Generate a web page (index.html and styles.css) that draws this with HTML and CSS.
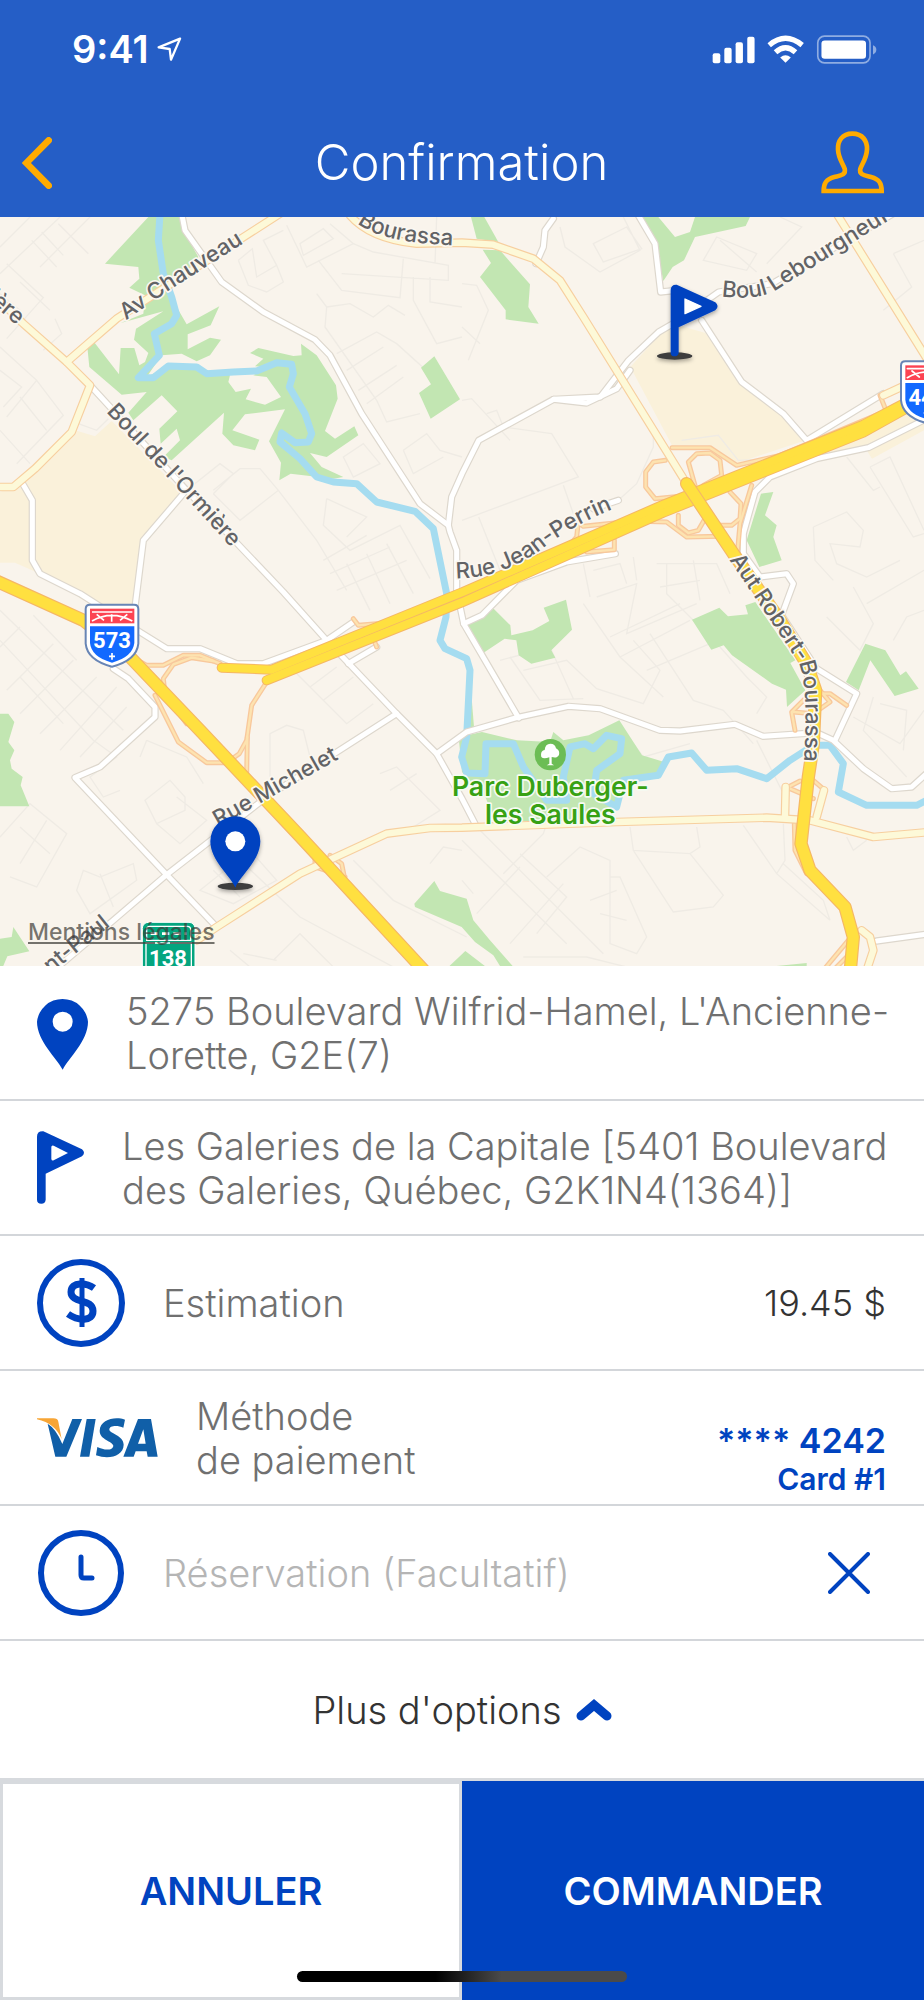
FILE: index.html
```html
<!DOCTYPE html>
<html lang="fr">
<head>
    <meta charset="UTF-8">
    <meta name="viewport" content="width=device-width, initial-scale=1">
    <title>Confirmation</title>
    <link rel="stylesheet" href="styles.css">
</head>
<body>

<header class="header">
    <div class="status-bar">
        <span class="time">9:41</span>
        <svg class="location" viewBox="468 108 80 78" aria-hidden="true">
            <path d="M539 115 L473 142 L507 147 L511 180 Z"/>
        </svg>
        <svg class="status-icons" viewBox="750 104 496 86" aria-hidden="true">
            <g fill="#fff">
                <rect x="752" y="158" width="23" height="30" rx="6"/>
                <rect x="787" y="142" width="22" height="46" rx="6"/>
                <rect x="821" y="125" width="22" height="63" rx="6"/>
                <rect x="856" y="109" width="22" height="79" rx="6"/>
                <path d="M971 187 L955 171 Q971 158 987 171 Z"/>
                <rect x="1079" y="120" width="134" height="55" rx="10"/>
            </g>
            <g fill="none" stroke="#fff" stroke-width="16">
                <path d="M922 134 Q971 93 1021 134"/>
                <path d="M941 155 Q971 128 1001 155"/>
            </g>
            <rect x="1068" y="107" width="157" height="80" rx="20" fill="none" stroke="#8fade2" stroke-width="5"/>
            <path d="M1234 134 Q1244 138 1244 148 Q1244 158 1234 162 Z" fill="#8fade2"/>
        </svg>
    </div>
    <nav class="nav-bar">
        <button class="icon-btn" aria-label="Retour">
            <svg width="30" height="52" viewBox="66 411 90 156"><path class="back-icon" d="M146 421 L79 489 L146 557"/></svg>
        </button>
        <h1>Confirmation</h1>
        <button class="icon-btn" aria-label="Profil">
            <svg width="64" height="63" viewBox="1076 389 192 189"><path class="user-icon" d="M1170 397 C1139 397 1126 419 1127 444 C1128 471 1141 485 1147 502 C1152 521 1135 522 1116 527 C1091 534 1084 546 1084 569 L1258 569 C1258 546 1251 534 1226 527 C1207 522 1189 520 1194 502 C1200 485 1213 471 1214 444 C1215 419 1201 397 1170 397 Z"/></svg>
        </button>
    </nav>
</header>

<main>
    <section class="map" aria-label="Carte du trajet">
        <svg viewBox="0 20 2772 2248">
            <defs>
                <g id="local-roads">
                    <path d="M545 10 L555 60 L665 215 L790 305 L945 388 L990 435 L1085 610 L1260 880 L1345 945 L1350 965 L1370 1020 L1370 1140 L1391 1240 L1556 1523"/>
                    <path d="M1345 945 L1355 860 L1386 790 L1436 690 L1661 567 L1801 560 L1886 450 L1976 365 L2036 330 L2156 245 L2316 220 L2680 10"/>
                    <path d="M1661 567 L1760 578 L1850 535 L1890 480"/>
                    <path d="M275 530 L560 840 L850 1145 L980 1290 L1190 1510 L1310 1630 L1386 1765 L1425 1840"/>
                    <path d="M550 850 L430 990 L405 1190"/>
                    <path d="M65 815 L97 870 L97 1050 L120 1090 L240 1150 L420 1265 L500 1315 L600 1315 L710 1360 L790 1360 L980 1290 L1060 1235"/>
                    <path d="M340 1375 L385 1405 L465 1490 L465 1520 L300 1670 L225 1702 L500 1993 L650 2150"/>
                    <path d="M1130 1310 L1045 1360"/>
                    <path d="M1310 1630 L1400 1565 L1550 1522 L1705 1488 L1800 1495 L1980 1560 L2040 1562 L2205 1542 L2290 1578 L2450 1567 L2500 1590 L2590 1675 L2675 1735 L2735 1730 L2790 1680"/>
                    <path d="M1190 1510 L800 1760 L500 1993 L340 2130 L150 2290"/>
                    <path d="M1912 10 L1965 100 L1982 245 L2030 240"/>
                    <path d="M2105 330 L2225 515 L2350 610 L2420 690 L2650 550"/>
                    <path d="M2790 620 L2605 712 L2450 745 L2310 800 L2265 845 L2230 970 L2230 1030 L2280 1100 L2360 1090 L2380 1120 L2345 1215 L2450 1375 L2570 1450 L2505 1590"/>
                    <path d="M1660 25 L1635 60 L1630 110 L1608 160"/>
                    <path d="M1855 870 L1780 895"/>
                    <path d="M1846 1030 L1700 1055 L1550 1110 L1446 1215 L1391 1240"/>
                    <path d="M2630 2192 L2790 2170"/>
                </g>
                <g id="avenues">
                    <path d="M-10 262 L70 340 L200 455 L270 525 L215 665 L105 775 L40 830 L-10 830"/>
                    <path d="M200 455 L350 325 L840 10"/>
                    <path d="M2510 10 L2790 460"/>
                    <path d="M2790 490 L2650 555"/>
                    <path d="M1050 15 Q1110 85 1250 100 L1386 97 L1480 103 L1600 145 L1680 210 L1750 320 L2060 820"/>
                    <path d="M590 2190 L650 2150 L900 1990 L1160 1870 L1290 1853 L1386 1852 L1850 1835 L2300 1822 L2430 1830 L2620 1880 L2790 1865"/>
                    <path d="M2355 1820 L2357 1730"/>
                    <path d="M2450 1820 L2472 1740"/>
                    <path d="M2600 2280 L2620 2220 L2610 2180 L2585 2160"/>
                </g>
                <g id="ramps">
                    <path d="M405 1345 L440 1365 L490 1365 L550 1335 L600 1335 L660 1360"/>
                    <path d="M640 1352 L575 1342 L520 1362 L490 1405 L495 1450 L560 1540"/>
                    <path d="M465 1455 L535 1595 L620 1657 L680 1657 L718 1630 L740 1590 L755 1485 L800 1415"/>
                    <path d="M742 1580 L740 1690"/>
                    <path d="M2016 712 L2130 712 L2210 765 L2340 735 L2640 610"/>
                    <path d="M1996 750 L1960 755 L1937 785 L1937 830 L1965 865 L2040 858"/>
                    <path d="M2085 825 L2065 755 L2090 730 L2130 728 L2160 750 L2165 795 L2110 825"/>
                    <path d="M2190 845 L2223 880 L2220 925 L2195 945 L2140 945"/>
                    <path d="M2255 825 L2220 940 L2213 1020"/>
                    <path d="M1700 1015 L1730 980 L1735 935 L1750 948 L1900 932 L2000 935 L2060 980 L2160 978"/>
                    <path d="M2035 915 L2035 945 L2065 968 L2095 960 L2115 925"/>
                    <path d="M1760 1025 L1843 1018 L1843 990"/>
                    <path d="M2385 1560 L2375 1505 L2430 1450 L2490 1450 L2540 1485"/>
                    <path d="M2380 1505 L2440 1510 L2490 1475 L2460 1440"/>
                    <path d="M2365 1730 L2400 1712 M2370 1735 L2440 1765 M2440 1710 L2475 1740"/>
                    <path d="M2383 1840 L2385 1920 L2420 1990"/>
                    <path d="M1060 1225 L1075 1245 L1130 1240 M1130 1310 L1118 1280"/>
                    <path d="M945 1930 L945 1970 L1035 2000 M990 1935 L1025 1960 L1035 2010"/>
                    <path d="M2470 2280 L2545 2190 M2500 2280 L2545 2235 M2640 555 L2660 605"/>
                </g>
                <g id="highway">
                    <path d="M665 1372 L815 1378 L1386 1146 L1990 883 L2590 643 L2720 575"/>
                    <path d="M800 1410 L1386 1176 L1990 907 L2590 667 L2800 550"/>
                </g>
                <g id="autoroute">
                    <path d="M-20 1108 L250 1230 L390 1340 L600 1560 L900 1878 L1290 2300"/>
                    <path d="M2060 820 L2090 865 L2200 1030 L2340 1230 L2420 1360 L2447 1440 L2440 1600 L2425 1700 L2403 1900 L2430 1980 L2535 2090 L2560 2180 L2550 2290"/>
                </g>
                <path id="lb-chauveau" d="M378 330 L500 245 L760 80"/>
                <path id="lb-ormiere" d="M318 605 L520 820 L760 1085"/>
                <path id="lb-ormiere-ouest" d="M-180 145 L50 345"/>
                <path id="lb-bourassa" d="M1072 38 Q1150 105 1420 106"/>
                <path id="lb-lebourgneuf" d="M2164 258 Q2290 275 2350 225 L2780 -40"/>
                <path id="lb-perrin" d="M1368 1104 Q1500 1105 1620 1020 Q1720 940 1880 880"/>
                <path id="lb-aut" d="M2188 1048 L2395 1355 Q2432 1440 2405 1740"/>
                <path id="lb-michelet" d="M655 1850 L1080 1610"/>
                <path id="lb-paul" d="M152 2290 L420 2075"/>
                <filter id="shadow" x="-20%" y="-20%" width="140%" height="140%">
                    <feDropShadow dx="0" dy="6" stdDeviation="6" flood-opacity="0.35"/>
                </filter>
            </defs>

            <rect class="land" x="0" y="0" width="2772" height="2300"/>

            <g class="district">
                <path d="M70 815 L210 655 L285 678 L335 632 L550 850 L428 990 L408 1145 L400 1265 L260 1175 L120 1090 L45 1057 L0 1057 L0 845 Z"/>
                <path d="M1891 470 L1986 365 L2036 345 L2116 368 L2226 515 L2351 610 L2416 690 L2206 760 L2126 705 L2016 705 Z"/>
                <path d="M2296 790 L2416 720 L2772 580 L2772 660 L2616 745 L2600 720 Z"/>
            </g>

            <!-- small streets -->
            <g class="streets">
                <path d="M0 190 L180 20 M0 110 L90 20 M120 170 L270 20 M60 215 L150 300 M20 160 L130 262 L20 385 M175 40 L265 130 M95 90 L170 170 M125 65 L190 135"/>
                <path d="M0 250 L60 300 M165 325 L185 370 L130 420 M0 410 L110 510 L20 620 M0 480 L65 530 L10 590 M110 510 L190 615 L50 760 M60 560 L140 660 M0 660 L90 760 M235 640 L290 660 L325 625"/>
                <path d="M715 150 L757 115 L770 200 L830 165 L790 90 L850 60 M715 150 L745 225 L800 245 L850 215 L830 165 M860 45 L920 170 L1060 100 L990 40 M900 100 L970 55 L1000 85 L910 135 Z"/>
                <path d="M955 150 L1025 240 L1200 262 L1210 145 M1025 190 L1345 210 L1345 165 L1120 125 L1060 100 M1240 200 L1240 270 L1310 400 L1386 380 M1290 200 L1290 275 L1386 290 M1310 20 L1305 160"/>
                <path d="M950 250 L980 290 L975 350 L1130 570 L1160 635 L1260 610 M980 290 L1050 280 L1120 320 L1165 285 L1215 315 M1010 430 L1130 365 L1190 400 L1290 490 M1040 480 L1150 410 M1075 540 L1190 465 M1100 580 L1210 500"/>
                <path d="M640 850 L720 930 L835 840 L950 990 L1040 1140 M640 840 L720 775 L780 775 L835 840 M560 840 L660 760 L700 790 L640 850 M980 865 L970 945 L1050 1020 L1200 945 L1290 1105 M980 865 L1100 920 L1040 980 M1030 740 L1090 700 L1140 760 L1060 800 Z M1210 720 L1280 670 L1320 720 L1386 740 M1210 720 L1240 790 L1330 740"/>
                <path d="M970 1050 L1100 975 M990 1090 L1170 1010 M1010 1140 L1220 1050 M1040 1060 L1110 1200 M1100 1030 L1170 1180 M1160 1000 L1240 1150"/>
                <path d="M1386 220 L1430 225 L1465 300 L1405 450 M1386 350 L1440 400 M1680 50 L1695 110 L1800 185 L1920 120 L1870 20 M1780 100 L1880 50 L1925 115 L1810 155 Z M2110 150 L2150 80 L2270 130 L2240 180 Z M2160 90 L2270 185 M2340 20 L2405 50 L2300 160"/>
                <path d="M1386 570 L1415 565 L1530 690 M1460 610 L1490 600 L1510 650 L1655 670 L1735 800 L1386 930 M1690 825 L1720 910 M1960 640 L1960 710 L1910 820 L1860 865 M2045 690 L2155 675 L2215 750 L2340 745 M1436 920 L1500 1080"/>
                <path d="M2680 130 L2772 90 M2680 130 L2735 230 L2650 300 M2540 740 L2620 840 L2640 830 M2610 770 L2670 740 L2772 960 M2610 770 L2740 980 L2772 970 M2440 950 L2540 905 L2590 960 L2580 1010 L2490 1000 L2510 1060 L2600 1100 L2700 1050 M2440 950 L2445 1050 L2500 1110"/>
                <path d="M1500 1350 L1650 1310 L1720 1465 M1530 1340 L1620 1470 L1750 1465 M1570 1380 L1700 1350 L1790 1435 L1930 1480 L1980 1380 L1900 1290 M1750 1180 L1860 1340 L1990 1460 M1790 1160 L1910 1120 L1880 1270 L2090 1180 M1830 1280 L2040 1180 M1860 1340 L2070 1230 M1940 1380 L2130 1300 M1950 1270 L2080 1470 L2170 1500 L2260 1600 M2000 1060 L2000 1150 L2160 1310 L2240 1400 L2300 1460 L2270 1510 M2080 1050 L2100 1170 M1980 1130 L2100 1110"/>
                <path d="M1770 1160 L1750 1060 M1780 1080 L1860 1060 L1880 1120 M1900 1040 L1910 1110 M1970 1060 L2150 1060 L2190 1150 M2480 1220 L2580 1320 L2620 1240 L2560 1130 M2680 1290 L2720 1220 L2772 1200 M2600 1180 L2772 1080 M2620 1460 L2590 1560 L2720 1700 M2560 1520 L2700 1600 L2772 1500 M2640 1480 L2720 1500 L2710 1620"/>
                <path d="M0 1200 L370 1560 M0 1290 L280 1590 M60 1250 L0 1310 M160 1300 L20 1440 M220 1350 L60 1510 M290 1400 L120 1570 M350 1430 L180 1620 M100 1215 L230 1350 M380 1490 L240 1640 M60 1400 L190 1540 M280 1590 L350 1640 L270 1700 L310 1760 L360 1740"/>
                <path d="M0 1880 L90 1780 L200 1870 L110 2030 L30 2000 M60 1850 L150 1930 M140 1830 L60 1960 M230 2040 L250 1980 L300 2000 L400 1960 L410 2010 L270 2110 Z M300 1990 L340 2090 M435 1770 L510 1710 L555 1760 L555 1800 L470 1840 Z M470 1840 L540 1900 L620 1830 L530 1760 M440 1590 L560 1640 L610 1720 M440 1590 L420 1640"/>
                <path d="M600 2040 L750 1920 L830 2010 L700 2080 Z M640 1980 L720 2060 M700 1930 L900 2120 L1180 2270 M690 2220 L750 2270 M820 2250 L900 2170 L1000 2270 M730 2230 L830 2250 M810 1700 L810 1570 L860 1545 L910 1560 L930 1640 M880 1380 L1040 1540 L1120 1480 M930 1430 L1010 1370 M970 1470 L1060 1400 M1140 1690 L1190 1670 L1320 1800 L1240 1850 M1170 1740 L1250 1690 M1060 1950 L1180 2070 L1400 2180 M1290 1960 L1330 1910 L1386 1920"/>
                <path d="M1386 1890 L1700 2200 M1440 1860 L1810 2230 M1386 2010 L1420 2050 M1510 1990 L1630 1870 L1640 1840 M1560 1930 L1700 2060 L1610 2170 M1640 2000 L1740 1910 L1830 1950 L1830 2200 L1910 2230 L1940 2180 L1860 2000 L1830 2000 M1430 2110 L1560 1970 M1530 2200 L1690 2020 M1570 2240 L1760 2240 L1880 2270 M1890 1850 L1900 1920 L2070 1930 L2100 1910 L2090 1850 M1900 1920 L2020 2105 L2140 2090 L2170 2055 L2070 1930 M1770 2070 L1850 2040 M1800 2110 L1880 2130"/>
                <path d="M2230 1845 L2330 1990 L2490 2130 M2350 1840 L2355 1950 L2330 1990 M2270 1590 L2350 1750 M1900 1600 L1930 1640 L2070 1600 M2350 1960 L2470 2070 L2490 2130 M2540 1880 L2560 1920 L2600 1890"/>
            </g>

            <g class="green">
                <path d="M445 20 L315 160 L415 170 L418 205 L388 232 L435 255 L430 310 L362 338 L490 303 L408 355 L402 388 L445 428 L435 455 L418 465 L403 413 L362 413 L357 492 L282 395 L262 410 L268 470 L365 553 L440 545 L385 607 L400 630 L485 555 L532 603 L478 655 L482 700 L530 655 L540 690 L490 740 L515 750 L672 607 L667 670 L700 705 L765 720 L778 688 L697 660 L735 612 L855 597 L807 693 L843 757 L838 810 L872 790 L1000 805 L1030 800 L965 770 L930 728 L980 740 L1075 675 L1063 648 L1005 685 L975 662 L1013 565 L1008 525 L950 435 L903 400 L905 435 L880 437 L775 413 L750 428 L790 445 L765 468 L800 470 L760 495 L800 500 L843 560 L795 583 L737 567 L753 535 L707 545 L685 515 L690 495 L600 480 L540 465 L490 475 L440 500 L485 435 L545 430 L590 453 L630 435 L663 388 L630 382 L563 417 L563 372 L632 345 L658 288 L560 342 L530 290 L510 240 L595 140 L550 60 L540 20 Z"/>
                <path d="M1303 438 L1263 472 L1293 522 L1257 548 L1292 625 L1380 567 Z"/>
                <path d="M1413 20 L1453 20 L1495 95 L1430 85 Z"/>
                <path d="M1448 118 L1500 120 L1590 222 L1585 290 L1616 340 L1517 327 L1517 300 L1440 200 L1473 158 Z"/>
                <path d="M1925 20 L1975 20 L2025 80 L2070 65 L2085 20 L2250 20 L2237 47 L2085 80 L2052 150 L2018 170 L1990 212 L1965 90 Z"/>
                <path d="M2283 850 L2320 845 L2295 915 L2330 945 L2320 980 L2345 1050 L2278 1070 L2240 990 Z"/>
                <path d="M1396 1250 L1481 1195 L1531 1245 L1534 1275 L1598 1260 L1648 1232 L1631 1192 L1698 1168 L1716 1258 L1654 1320 L1666 1342 L1594 1360 L1556 1335 L1549 1290 L1514 1285 L1444 1332 Z"/>
                <path d="M2076 1228 L2158 1192 L2184 1218 L2244 1212 L2236 1185 L2266 1175 L2386 1350 L2371 1358 L2416 1440 L2361 1490 L2358 1438 L2316 1420 L2196 1335 L2171 1305 L2134 1318 Z"/>
                <path d="M2596 1300 L2656 1320 L2701 1395 L2718 1383 L2756 1435 L2684 1457 L2611 1350 L2576 1440 L2538 1415 Z"/>
                <path d="M1376 1580 L1446 1565 L1551 1590 L1650 1595 L1660 1565 L1690 1590 L1766 1575 L1858 1530 L1926 1635 L1993 1655 L1976 1705 L1876 1710 L1856 1780 L1786 1832 L1486 1832 L1456 1760 L1386 1685 Z"/>
                <path d="M1400 1440 L1413 1440 L1422 1550 L1395 1565 Z"/>
                <path d="M0 1510 L25 1510 L43 1535 L25 1595 L43 1620 L30 1650 L35 1675 L68 1700 L62 1725 L88 1788 L0 1788 Z"/>
                <path d="M0 2185 L35 2180 L40 2150 L88 2223 L22 2238 L0 2290 Z"/>
                <path d="M1243 2080 L1303 2012 L1320 2042 L1400 2065 L1420 2130 L1470 2190 L1545 2275 L1505 2275 L1480 2235 L1425 2195 L1385 2150 L1245 2090 Z"/>
                <path d="M1340 2275 L1396 2222 L1465 2275 Z"/>
                <path d="M2320 2268 L2420 2258 L2420 2275 Z"/>
            </g>

            <path class="river" d="M480 10 L475 90 L490 190 L515 260 L530 315 L515 340 L463 370 L478 435 L415 502 L460 502 L505 467 L590 470 L620 490 L700 485 L770 482 L830 457 L875 462 L880 490 L868 530 L915 610 L935 670 L925 695 L885 697 L845 668 L840 695 L900 745 L950 800 L1000 815 L1070 820 L1130 875 L1245 903 L1300 955 L1340 1150 L1338 1220 L1320 1290 L1335 1315 L1400 1345 L1410 1380 L1400 1580 L1385 1640 L1400 1688 L1455 1690 L1458 1600 L1540 1600 L1570 1670 L1640 1770 L1700 1770 L1690 1700 L1710 1610 L1755 1600 L1780 1615 L1820 1575 L1865 1585 L1860 1630 L1790 1680 L1780 1750 L1850 1790 L1870 1710 L1975 1695 L2005 1640 L2075 1628 L2120 1680 L2210 1675 L2300 1705 L2370 1650 L2440 1605 L2490 1605 L2530 1660 L2515 1745 L2600 1785 L2750 1785 L2790 1765"/>

            <use href="#local-roads" class="local-case"/>
            <use href="#local-roads" class="local"/>
            <use href="#ramps" class="ramp-case"/>
            <use href="#ramps" class="ramp"/>
            <use href="#avenues" class="avenue-case"/>
            <use href="#avenues" class="avenue"/>
            <use href="#highway" class="highway-case"/>
            <use href="#highway" class="highway"/>
            <use href="#autoroute" class="autoroute-case"/>
            <use href="#autoroute" class="autoroute"/>

            <g class="street-label">
                <text><textPath href="#lb-chauveau">Av Chauveau</textPath></text>
                <text><textPath href="#lb-ormiere">Boul de l'Ormière</textPath></text>
                <text text-anchor="end"><textPath href="#lb-ormiere-ouest" startOffset="100%">mière</textPath></text>
                <text><textPath href="#lb-bourassa">Bourassa</textPath></text>
                <text><textPath href="#lb-lebourgneuf">Boul Lebourgneuf</textPath></text>
                <text><textPath href="#lb-perrin">Rue Jean-Perrin</textPath></text>
                <text><textPath href="#lb-aut">Aut Robert-Bourassa</textPath></text>
                <text><textPath href="#lb-michelet">Rue Michelet</textPath></text>
                <text><textPath href="#lb-paul">nt-Paul</textPath></text>
            </g>

            <circle cx="1651" cy="1633" r="47" fill="#6cbd55"/>
            <path fill="#fff" d="M1624 1640 Q1620 1622 1634 1619 Q1636 1600 1651 1600 Q1666 1600 1668 1614 Q1680 1620 1677 1633 Q1672 1645 1655 1640 L1655 1660 L1662 1665 L1640 1665 L1648 1660 L1648 1641 Q1630 1647 1624 1640 Z"/>
            <g class="park-label">
                <text x="1651" y="1758">Parc Duberger-</text>
                <text x="1651" y="1842">les Saules</text>
            </g>

            <!-- highway shields -->
            <g id="shield">
                <path d="M270 1183 L402 1183 Q415 1183 415 1196 L415 1300 Q410 1350 336 1369 Q262 1350 257 1300 L257 1196 Q257 1183 270 1183 Z" fill="#fff" stroke="#6885b5" stroke-width="6"/>
                <rect x="270" y="1195" width="133" height="44" fill="#fc4352"/>
                <path d="M276 1205 H397 M276 1232 Q335 1198 397 1232 M290 1212 L312 1230 M335 1212 V1234 M382 1212 L360 1230" fill="none" stroke="#fff" stroke-width="5"/>
                <path d="M270 1248 H403 V1298 Q398 1340 336 1357 Q274 1340 270 1298 Z" fill="#1269ff"/>
                <path d="M336 1328 V1348 M327 1338 H345" stroke="#fff" stroke-width="5"/>
            </g>
            <text class="shield-num" x="336" y="1314">573</text>
            <use href="#shield" x="2446" y="-730"/>
            <text class="shield-num" x="2782" y="583">440</text>
            <rect x="427" y="2136" width="158" height="180" rx="18" fill="#04a57f" stroke="#fff" stroke-width="3"/>
            <path d="M440 2158 Q440 2148 450 2148 H562 Q572 2148 572 2158 V2190 H440 Z M436 2198 H576 M438 2198 V2290 M574 2198 V2290" fill="none" stroke="#fff" stroke-width="4"/>
            <path d="M452 2170 H560" stroke="#fff" stroke-width="8" stroke-dasharray="22 12"/>
            <text class="shield-num" x="504" y="2267">138</text>

            <!-- pick-up and destination -->
            <g filter="url(#shadow)">
                <ellipse cx="706" cy="2028" rx="53" ry="11" fill="#3c3c3c"/>
                <path d="M706 2032 C690 1995 631 1950 631 1893 A75 75 0 0 1 781 1893 C781 1950 722 1995 706 2032 Z" fill="#0043c0"/>
                <circle cx="706" cy="1893" r="30" fill="#fff"/>
            </g>
            <g filter="url(#shadow)">
                <ellipse cx="2024" cy="437" rx="53" ry="11" fill="#3c3c3c"/>
                <path d="M2012 240 Q2012 222 2030 223 L2146 276 Q2160 288 2146 300 L2036 351 V428 Q2034 438 2024 438 Q2012 438 2012 428 Z" fill="#0043c0"/>
                <path d="M2055 266 L2103 288 L2055 310 Z" fill="#fff" stroke="#fff" stroke-width="4" stroke-linejoin="round"/>
            </g>
        </svg>
        <a class="legal" href="#">Mentions légales</a>
    </section>

    <section class="row address">
        <svg width="51" height="74" viewBox="111 104 153 222" aria-hidden="true"><path fill="#0043c0" fill-rule="evenodd" d="M188 325 C170 290 111 238 111 181 A77 77 0 0 1 264 181 C264 238 206 290 188 325 Z M188 151 A30 30 0 1 0 188 211 A30 30 0 1 0 188 151 Z"/></svg>
        <p>5275 Boulevard Wilfrid-Hamel, L'Ancienne-Lorette, G2E(7)</p>
    </section>

    <section class="row address">
        <svg width="47" height="73" viewBox="111 514 141 219" aria-hidden="true"><path fill="#0043c0" fill-rule="evenodd" d="M111 531 Q111 514 130 515 L246 569 Q258 579 246 590 L137 642 V720 Q136 732 124 732 Q111 732 111 720 Z M154 562 V598 Q155 604 161 602 L204 580 L161 558 Q154 556 154 562 Z"/></svg>
        <p>Les Galeries de la Capitale [5401 Boulevard des Galeries, Québec, G2K1N4(1364)]</p>
    </section>

    <section class="row">
        <svg width="88" height="88" viewBox="0 0 88 88" aria-hidden="true">
            <circle cx="44" cy="44" r="41" fill="none" stroke="#0043c0" stroke-width="6"/>
            <path fill="none" stroke="#0043c0" stroke-width="7" d="M57 29 C50 24 34 22 34 33 C34 45 56 39 56 52 C56 63 41 62 31 55"/>
            <path stroke="#0043c0" stroke-width="5" d="M45 19 V68"/>
        </svg>
        <p>Estimation</p>
        <output class="price">19.45 $</output>
    </section>

    <section class="row">
        <svg width="121" height="40" viewBox="111 146 363 120" role="img" aria-label="Visa">
            <g fill="#105fa8">
                <path d="M143 163 Q168 178 187 224 L217 149 L246 149 L199 262 L166 262 Z"/>
                <path d="M260 149 L287 149 L268 262 L240 262 Z"/>
                <path d="M375 151 L370 175 C355 168 328 167 328 181 C330 193 371 198 371 226 C370 260 328 272 288 258 L292 233 C310 242 338 246 340 229 C338 215 299 212 299 184 C301 149 346 141 375 151 Z"/>
                <path fill-rule="evenodd" d="M414 149 L453 149 L473 262 L443 262 L440 246 L407 246 L401 262 L370 262 Z M430 180 L414 223 L437 223 Z"/>
            </g>
            <path fill="#f7a535" d="M111 147 L160 147 Q173 147 175 157 L185 210 Q167 163 111 150 Z"/>
        </svg>
        <p>Méthode<br>de paiement</p>
        <div class="card">
            <strong>**** 4242</strong>
            <span>Card #1</span>
        </div>
    </section>

    <section class="row">
        <svg width="88" height="88" viewBox="0 0 88 88" aria-hidden="true">
            <circle cx="44" cy="44" r="40" fill="none" stroke="#0043c0" stroke-width="6"/>
            <path fill="none" stroke="#0043c0" stroke-width="5" stroke-linecap="round" d="M44 28 V46 Q44 49 47 49 H55"/>
        </svg>
        <input type="text" aria-label="Réservation" placeholder="Réservation (Facultatif)">
        <button class="icon-btn clear" aria-label="Effacer">
            <svg width="42" height="42" viewBox="0 0 42 42"><path stroke="#0043c0" stroke-width="4" stroke-linecap="round" d="M2 2 L40 40 M40 2 L2 40"/></svg>
        </button>
    </section>

    <button class="more">
        Plus d'options
        <svg width="36" height="24" viewBox="0 0 36 24" aria-hidden="true"><path fill="none" stroke="#0043c0" stroke-width="9" stroke-linecap="round" d="M5 18 L18 7 L31 18"/></svg>
    </button>
</main>

<footer class="actions">
    <button class="cancel">ANNULER</button>
    <button class="order">COMMANDER</button>
    <div class="home-indicator"></div>
</footer>

</body>
</html>
```

FILE: styles.css
```css
* {
    box-sizing: border-box;
}

body {
    margin: 0;
    min-height: 100vh;
    display: flex;
    flex-direction: column;
    font-family: Inter, "Open Sans", sans-serif;
    font-size: 38px;
    font-weight: 300;
    line-height: 44px;
    color: #707070;
    background: white;
}

button {
    font: inherit;
    border: none;
    background: none;
    padding: 0;
    cursor: pointer;
}

svg {
    display: block;
    flex-shrink: 0;
}

h1, p {
    margin: 0;
}

/* header */
.header {
    background: #255ec6;
    color: white;
}

.status-bar {
    display: flex;
    align-items: center;
    height: 98px;
    padding: 0 47px 0 72px;
}

.time {
    font-weight: 600;
}

.location {
    width: 26px;
    height: 26px;
    margin-left: 8px;
    fill: none;
    stroke: white;
    stroke-width: 7;
    stroke-linejoin: round;
}

.status-icons {
    width: 165px;
    height: 29px;
    margin-left: auto;
}

.nav-bar {
    display: grid;
    grid-template-columns: 80px 1fr 64px;
    align-items: center;
    height: 119px;
    padding: 10px 39px 0 22px;
}

h1 {
    font-size: 49px;
    font-weight: 300;
    text-align: center;
}

.back-icon {
    fill: none;
    stroke: #ffab00;
    stroke-width: 20;
    stroke-linecap: round;
}

.user-icon {
    fill: none;
    stroke: #ffab00;
    stroke-width: 14;
}

/* map */
.map {
    position: relative;
}

.map svg {
    width: 100%;
    height: auto;
}

.land {
    fill: #f9f4ec;
}

.district {
    fill: #faf1da;
}

.streets {
    fill: none;
    stroke: #efebe4;
    stroke-width: 4;
}

.green {
    fill: #c2e6b2;
}

.river {
    fill: none;
    stroke: #a5dcf0;
    stroke-width: 21;
    stroke-linejoin: round;
}

use {
    fill: none;
    stroke-linecap: round;
    stroke-linejoin: round;
}

.local-case { stroke: #ddd7cd; stroke-width: 22; }
.local { stroke: white; stroke-width: 15; }
.ramp-case { stroke: #f8c89c; stroke-width: 15; }
.ramp { stroke: #fde3b0; stroke-width: 7; }
.avenue-case { stroke: #f7cf9f; stroke-width: 26; }
.avenue { stroke: #fdf9d8; stroke-width: 19; }
.highway-case { stroke: #f5b765; stroke-width: 30; }
.highway { stroke: #ffe040; stroke-width: 24; }
.autoroute-case { stroke: #f5b765; stroke-width: 40; }
.autoroute { stroke: #ffe040; stroke-width: 33; }

.street-label {
    font-size: 67px;
    font-weight: 500;
    fill: #626366;
    stroke: #fbf7f0;
    stroke-width: 10;
    stroke-linejoin: round;
    paint-order: stroke;
}

.park-label {
    font-size: 80px;
    font-weight: 600;
    text-anchor: middle;
    fill: #37a114;
    stroke: #f6fbf2;
    stroke-width: 10;
    stroke-linejoin: round;
    paint-order: stroke;
}

.shield-num {
    font-family: "Liberation Sans Narrow", Roboto, sans-serif;
    font-size: 66px;
    font-weight: 700;
    text-anchor: middle;
    fill: white;
}

.legal {
    position: absolute;
    left: 28px;
    bottom: 20px;
    font-size: 23px;
    font-weight: 500;
    line-height: 28px;
    color: rgba(60, 58, 54, 0.7);
}

/* details */
.row {
    display: flex;
    align-items: center;
    gap: 38px;
    min-height: 135px;
    padding: 0 38px 0 37px;
    border-bottom: 2px solid #d3d6da;
}

.address {
    padding-right: 8px;
}

.price {
    margin-left: auto;
    font-size: 36px;
    color: #333;
}

.card {
    display: flex;
    flex-direction: column;
    align-self: flex-end;
    margin-left: auto;
    padding-bottom: 6px;
    text-align: right;
    font-size: 30px;
    font-weight: 600;
    line-height: 38px;
    color: #0043c0;
}

.card strong {
    font-size: 34px;
    font-weight: 600;
}

.row input {
    flex: 1;
    min-width: 0;
    padding: 0;
    border: none;
    outline: none;
    font: inherit;
    color: #333;
}

.row input::placeholder {
    color: #b5b5b5;
}

.clear {
    margin-right: 16px;
}

.more {
    display: flex;
    align-items: center;
    justify-content: center;
    gap: 14px;
    width: 100%;
    min-height: 137px;
    color: #333;
}

/* bottom buttons */
.actions {
    position: relative;
    display: grid;
    grid-template-columns: 1fr 1fr;
    flex: 1;
    min-height: 160px;
    border-top: 3px solid #d7dade;
}

.actions button {
    font-weight: 600;
}

.cancel {
    color: #0043c0;
    border: 3px solid #d7dade;
}

.order {
    color: white;
    background: #0043c0;
}

.home-indicator {
    position: absolute;
    left: 50%;
    bottom: 18px;
    width: 330px;
    height: 11px;
    margin-left: -165px;
    border-radius: 6px;
    background: linear-gradient(to right, black 42%, #4a4a4a 62%);
}
```
